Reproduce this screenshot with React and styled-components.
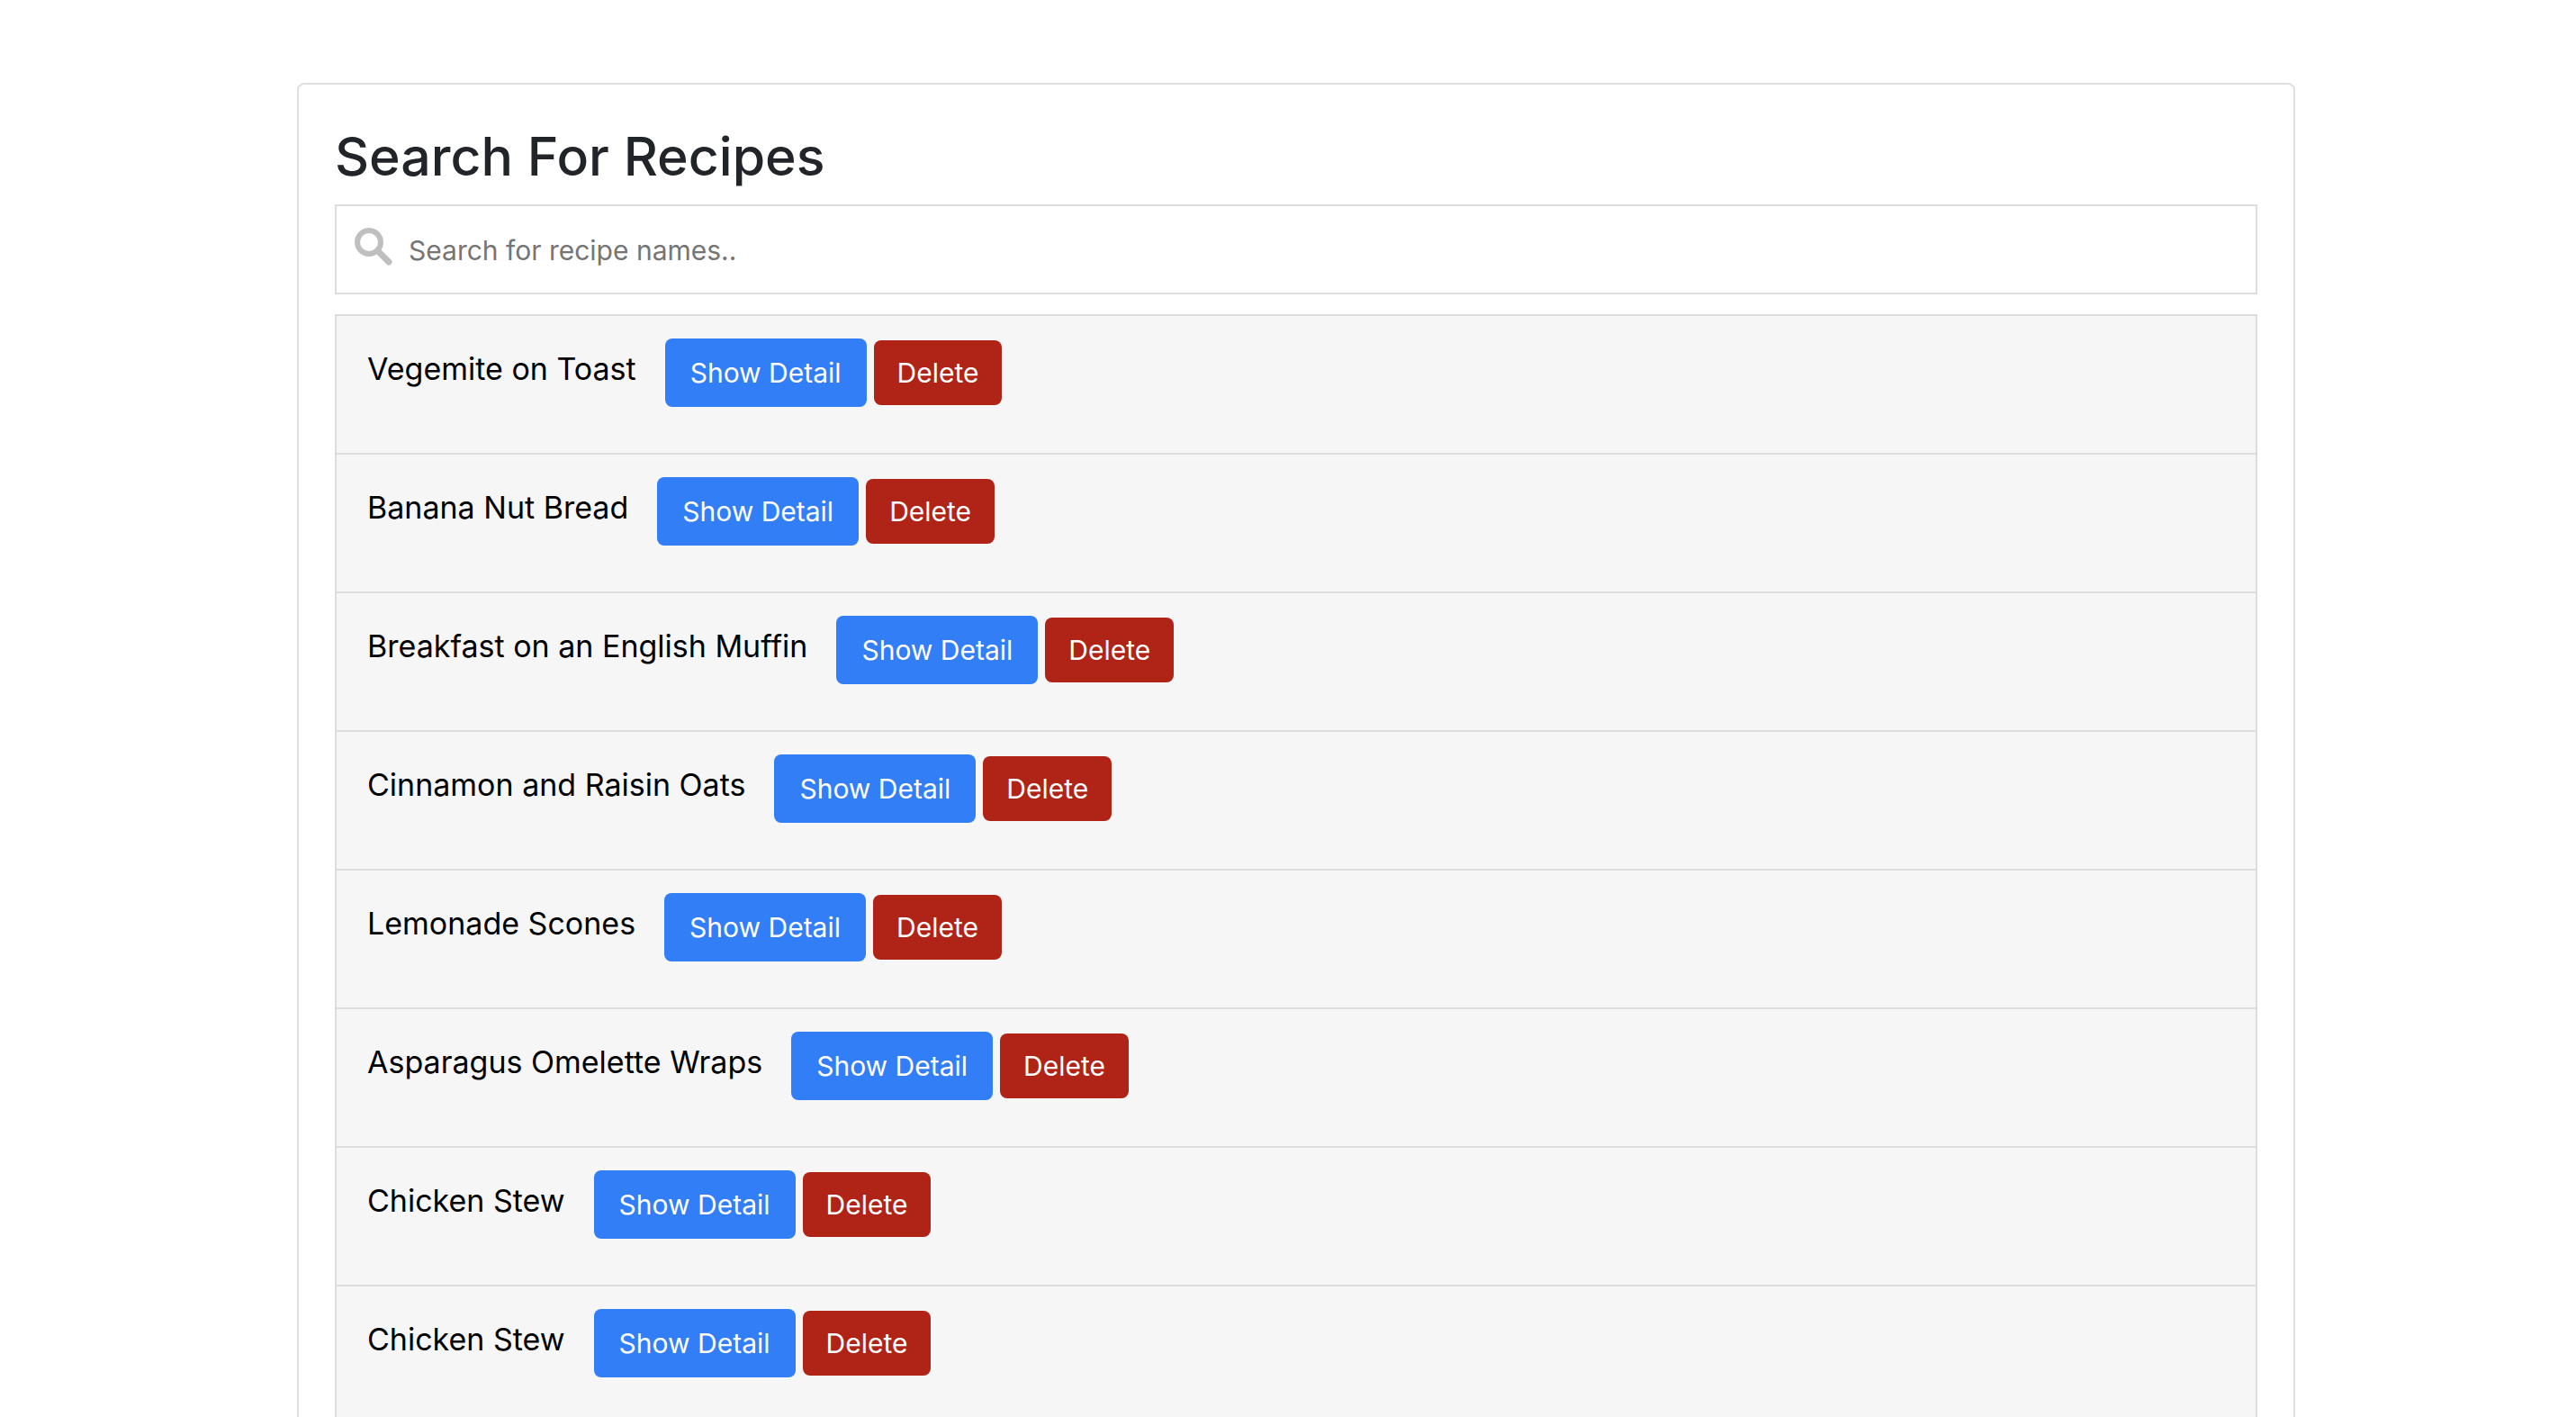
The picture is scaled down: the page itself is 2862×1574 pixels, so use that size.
import React, { useState } from "react";
import styled, { createGlobalStyle } from "styled-components";

const GlobalStyle = createGlobalStyle`
  * { box-sizing: border-box; }
  body {
    margin: 0;
    background: #fff;
    color: #212529;
    font-family: Inter, Roboto, "Liberation Sans", sans-serif;
    font-size: 30px;
    line-height: 48px;
  }
`;

const Page = styled.main`
  height: 100vh;
  overflow: hidden;
  padding: 92px 312px 0 330px;
`;

const Card = styled.section`
  border: 2px solid #dfdfdf;
  border-radius: 8px;
  padding: 40px;
`;

const Title = styled.h1`
  margin: 0 0 14px;
  font-size: 59px;
  font-weight: 500;
  line-height: 79px;
`;

const SearchBox = styled.label`
  display: flex;
  align-items: flex-start;
  gap: 18px;
  height: 100px;
  margin-bottom: 22px;
  padding: 24px 20px;
  border: 2px solid #ddd;
`;

const SearchIcon = styled.svg`
  flex: none;
  width: 42px;
  height: 42px;
`;

const SearchInput = styled.input`
  flex: 1;
  min-width: 0;
  height: 50px;
  padding: 0;
  border: 0;
  outline: 0;
  background: transparent;
  color: #212529;
  font: inherit;

  &::placeholder {
    color: #757575;
    opacity: 1;
  }
`;

const RecipeList = styled.ul`
  margin: 0;
  padding: 0;
  list-style: none;
  border: 2px solid #ddd;
`;

const RecipeRow = styled.li`
  display: flex;
  align-items: flex-start;
  height: 154px;
  padding: 25px 34px;
  background: #f6f6f6;
  border-bottom: 2px solid #ddd;
`;

const RecipeName = styled.span`
  margin-right: 32px;
  color: #000;
  font-size: 34px;
  line-height: 68px;
`;

const Actions = styled.div`
  display: flex;
  align-items: center;
  gap: 8px;
`;

const Button = styled.button`
  height: ${(p) => (p.$danger ? 72 : 76)}px;
  padding: 0 ${(p) => (p.$danger ? 26 : 28)}px;
  border: 0;
  border-radius: 8px;
  background: ${(p) => (p.$danger ? "#b02418" : "#317ef6")};
  color: #fff;
  font: inherit;
  white-space: nowrap;
  cursor: pointer;
`;

const recipes = [
  "Vegemite on Toast",
  "Banana Nut Bread",
  "Breakfast on an English Muffin",
  "Cinnamon and Raisin Oats",
  "Lemonade Scones",
  "Asparagus Omelette Wraps",
  "Chicken Stew",
  "Chicken Stew",
];

export default function App() {
  const [query, setQuery] = useState("");
  const visible = recipes.filter((name) =>
    name.toLowerCase().includes(query.toLowerCase())
  );

  return (
    <>
      <GlobalStyle />
      <Page>
        <Card>
          <Title>Search For Recipes</Title>
          <SearchBox>
            <SearchIcon viewBox="0 0 42 42" fill="none" stroke="#bfbfbf" aria-hidden="true">
              <circle cx="16" cy="16" r="13" strokeWidth="6" />
              <path d="M26 26 L38 38" strokeWidth="7" strokeLinecap="round" />
            </SearchIcon>
            <SearchInput
              type="text"
              aria-label="Search for recipe names"
              placeholder="Search for recipe names.."
              value={query}
              onChange={(e) => setQuery(e.target.value)}
            />
          </SearchBox>
          <RecipeList>
            {visible.map((name, i) => (
              <RecipeRow key={i}>
                <RecipeName>{name}</RecipeName>
                <Actions>
                  <Button type="button">Show Detail</Button>
                  <Button type="button" $danger>Delete</Button>
                </Actions>
              </RecipeRow>
            ))}
          </RecipeList>
        </Card>
      </Page>
    </>
  );
}
